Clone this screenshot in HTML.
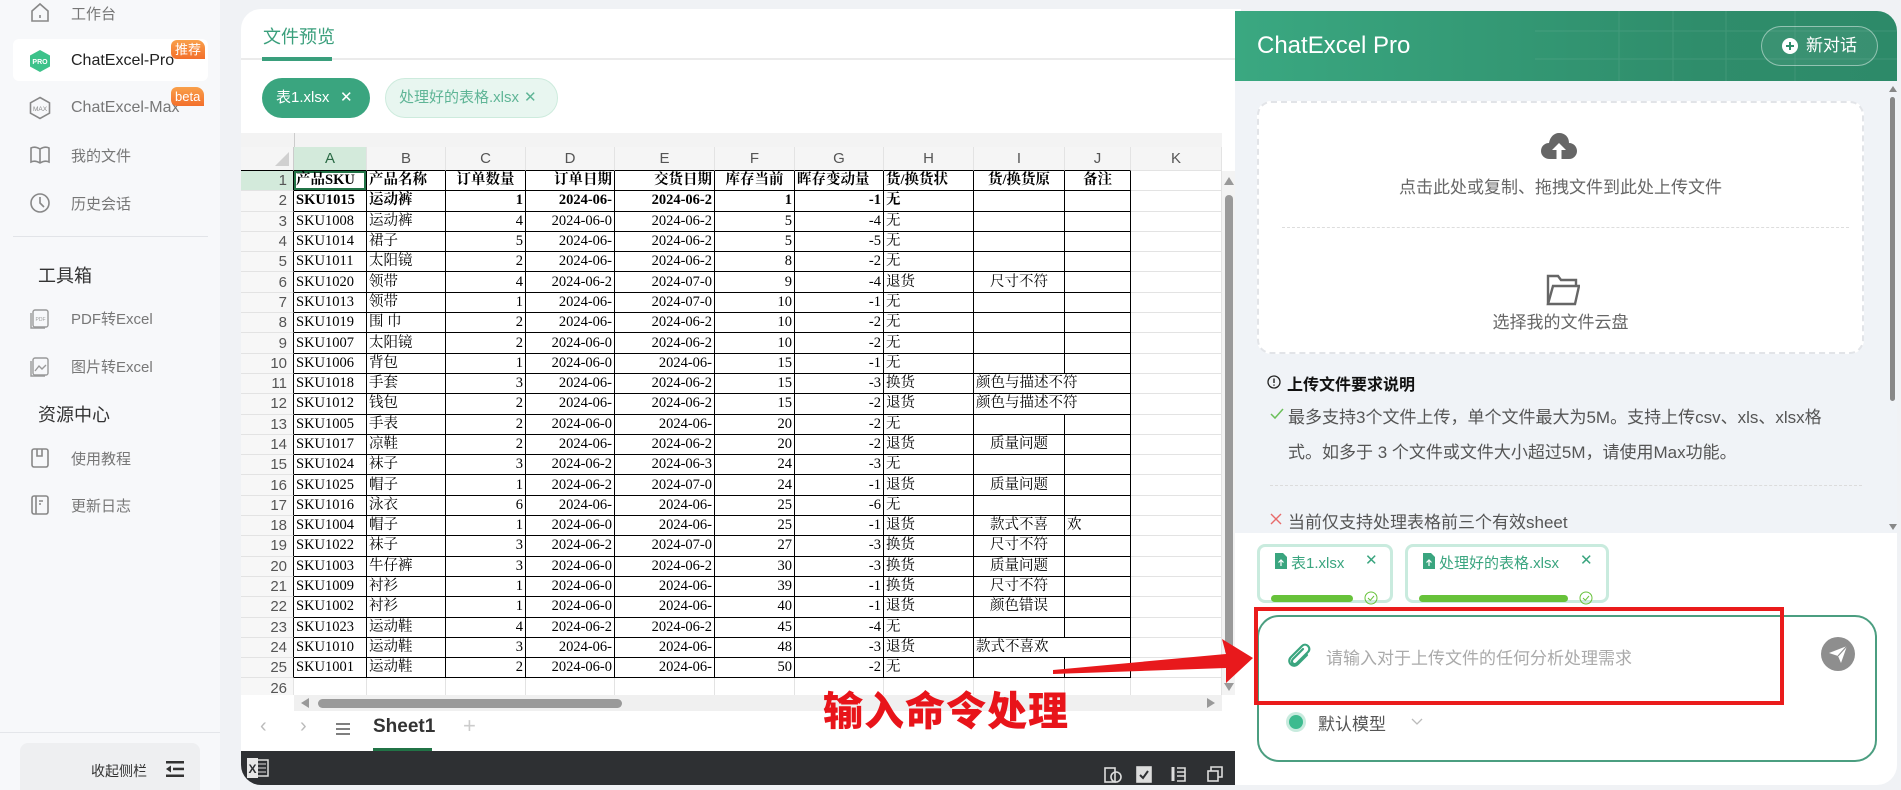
<!DOCTYPE html>
<html><head><meta charset="utf-8"><style>
*{box-sizing:border-box;margin:0;padding:0}
body{width:1901px;height:790px;overflow:hidden;background:#f0f2f5;font-family:"Liberation Sans","Noto Sans CJK SC",sans-serif;position:relative}
.abs{position:absolute}
#side{left:0;top:0;width:220px;height:790px;background:#f7f8fa}
.it{position:absolute;left:0;width:220px;height:30px;display:flex;align-items:center;font-size:15px;color:#777}
.it svg{position:absolute;left:29px}
.it span{position:absolute;left:71px}
.badge{position:absolute;color:#fff;font-size:13px;border-radius:6px 8px 0 6px;background:linear-gradient(180deg,#f9a04b,#f36f2b);padding:0 4px;height:19px;line-height:19px}
#main{left:241px;top:9px;width:1000px;height:776px;background:#fff;border-radius:20px 0 0 20px;overflow:hidden}
table{border-collapse:separate;border-spacing:0;table-layout:fixed;font-family:"Liberation Serif","Noto Serif CJK SC",serif;font-size:14.5px;color:#000}
td{height:20.3px;border-right:1px solid #e3e3e3;border-bottom:1px solid #e3e3e3;white-space:nowrap;overflow:hidden;padding:0 2px;line-height:19px}
td.d{border-right:1px solid #000;border-bottom:1px solid #000}
td.r{text-align:right}
td.c{text-align:center}
td.ov{overflow:visible;border-right:none}
td.h{background:#f7f7f7;color:#555;text-align:right;padding-right:6px;font-family:"Liberation Sans",sans-serif;font-size:15px;border-right:1px solid #000;border-bottom:1px solid #e3e3e3}
tr.ch td{height:24px;background:#f5f5f5;color:#555;text-align:center;font-family:"Liberation Sans",sans-serif;font-size:15px;border-bottom:1px solid #000;border-right:1px solid #e3e3e3}
tr.b td{font-weight:bold}
#chat{left:1235px;top:11px;width:662px;height:774px;background:#f0f3f7;border-radius:0 20px 20px 0;overflow:hidden}
</style></head><body>

<div id="side" class="abs">
 <div class="it" style="top:-2px"><svg width="22" height="22" viewBox="0 0 22 22" fill="none" stroke="#888" stroke-width="1.6"><path d="M3 9 L11 2 L19 9 V19 H3 Z"/><path d="M11 13v3"/></svg><span>工作台</span></div>
 <div class="abs" style="left:13px;top:39px;width:195px;height:42px;background:#fff;border-radius:6px"></div>
 <div class="it" style="top:46px;color:#222;font-size:16px"><svg width="22" height="24" viewBox="0 0 22 24"><path d="M11 1 L21 6.5 V17.5 L11 23 L1 17.5 V6.5 Z" fill="#3cc28a"/><text x="11" y="15" font-size="7" fill="#fff" text-anchor="middle" font-family="Liberation Sans" font-weight="bold">PRO</text></svg><span>ChatExcel-Pro</span></div>
 <div class="badge" style="left:171px;top:40px">推荐</div>
 <div class="it" style="top:93px;font-size:16px"><svg width="22" height="24" viewBox="0 0 22 24" fill="none" stroke="#888" stroke-width="1.6"><path d="M11 1.5 L20.5 6.8 V17.2 L11 22.5 L1.5 17.2 V6.8 Z"/><text x="11" y="15" font-size="6.5" fill="#888" stroke="none" text-anchor="middle" font-family="Liberation Sans">MAX</text></svg><span>ChatExcel-Max</span></div>
 <div class="badge" style="left:171px;top:87px">beta</div>
 <div class="it" style="top:140px"><svg width="22" height="22" viewBox="0 0 22 22" fill="none" stroke="#888" stroke-width="1.6"><path d="M2 4 Q6 2 11 5 Q16 2 20 4 V18 Q16 16 11 19 Q6 16 2 18 Z M11 5 V19"/></svg><span>我的文件</span></div>
 <div class="it" style="top:188px"><svg width="22" height="22" viewBox="0 0 22 22" fill="none" stroke="#888" stroke-width="1.6"><circle cx="11" cy="11" r="9"/><path d="M11 5 V11 L15 15"/></svg><span>历史会话</span></div>
 <div class="abs" style="left:13px;top:236px;width:195px;height:1px;background:#e2e4e8"></div>
 <div class="abs" style="left:38px;top:262px;font-size:18px;color:#333">工具箱</div>
 <div class="it" style="top:303px"><svg width="22" height="22" viewBox="0 0 22 22" fill="none" stroke="#999" stroke-width="1.4"><rect x="4" y="3" width="15" height="17" rx="2"/><path d="M2 6 V21 H16"/><text x="11.5" y="14" font-size="5" fill="#999" stroke="none" text-anchor="middle">PDF</text></svg><span>PDF转Excel</span></div>
 <div class="it" style="top:351px"><svg width="22" height="22" viewBox="0 0 22 22" fill="none" stroke="#999" stroke-width="1.4"><rect x="4" y="3" width="15" height="17" rx="2"/><path d="M2 6 V21 H16"/><path d="M6 16 L10 11 L13 14 L17 10"/></svg><span>图片转Excel</span></div>
 <div class="abs" style="left:38px;top:401px;font-size:18px;color:#333">资源中心</div>
 <div class="it" style="top:443px"><svg width="22" height="22" viewBox="0 0 22 22" fill="none" stroke="#888" stroke-width="1.6"><rect x="3" y="2" width="16" height="18" rx="2"/><path d="M8 2 V9 H13 V2"/></svg><span>使用教程</span></div>
 <div class="it" style="top:490px"><svg width="22" height="22" viewBox="0 0 22 22" fill="none" stroke="#888" stroke-width="1.6"><rect x="3" y="2" width="16" height="18" rx="2"/><path d="M7 2 V20 M10 7 H14 M10 10 H12"/></svg><span>更新日志</span></div>
 <div class="abs" style="left:0;top:732px;width:220px;height:1px;background:#e4e6ea"></div>
 <div class="abs" style="left:20px;top:743px;width:180px;height:47px;background:#eeeff1;border-radius:8px 8px 0 0"></div>
 <div class="abs" style="left:91px;top:761px;font-size:14px;color:#333">收起侧栏</div>
 <svg class="abs" style="left:166px;top:761px" width="18" height="16" viewBox="0 0 18 16" fill="#333"><rect x="0" y="0" width="18" height="2.5"/><rect x="7" y="6.7" width="11" height="2.5"/><rect x="0" y="13.5" width="18" height="2.5"/><path d="M0 8 L5 4.5 V11.5 Z"/></svg>
</div>

<div id="main" class="abs">
 <div class="abs" style="left:22px;top:14px;font-size:18px;color:#3a9f7c">文件预览</div>
 <div class="abs" style="left:0;top:49px;width:1000px;height:2px;background:#ebebeb"></div>
 <div class="abs" style="left:21px;top:48px;width:70px;height:4px;background:#3a9f7c"></div>
 <div class="abs" style="left:21px;top:69px;width:108px;height:40px;border-radius:20px;background:#3aa57f;color:#fff;font-size:15px;line-height:40px;padding-left:14px">表1.xlsx<span style="position:absolute;left:78px;font-size:15px">✕</span></div>
 <div class="abs" style="left:144px;top:69px;width:173px;height:40px;border-radius:20px;background:#e8f6f0;border:1px solid #cdebdd;color:#5fb596;font-size:15px;line-height:38px;padding-left:13px">处理好的表格.xlsx<span style="position:absolute;left:138px">✕</span></div>

 <div class="abs" style="left:0;top:124px;width:981px;height:14px;background:#f3f3f3"></div>
 <div class="abs" style="left:53px;top:124px;width:1px;height:14px;background:#ccc"></div>
 <div class="abs" style="left:0;top:138px;width:981px;height:548px;overflow:hidden">
 <table style="width:981px">
 <colgroup><col style="width:53px"><col style="width:73px"><col style="width:79px"><col style="width:80px"><col style="width:89px"><col style="width:100px"><col style="width:80px"><col style="width:89px"><col style="width:90px"><col style="width:91px"><col style="width:66px"><col style="width:91px"></colgroup>
 <tr class="ch"><td style="border-right:1px solid #ccc"><svg width="14" height="14" style="position:relative;left:15px;top:3px"><path d="M14 0 V14 H0 Z" fill="#d0d0d0"/></svg></td><td style="background:#d3eadb;color:#2a6a45">A</td><td>B</td><td>C</td><td>D</td><td>E</td><td>F</td><td>G</td><td>H</td><td>I</td><td>J</td><td style="border-bottom:1px solid #e3e3e3">K</td></tr>
 <tr class="b"><td class="h" style="background:#d3eadb;font-weight:normal">1</td><td class="d" style="box-shadow:inset 0 0 0 2px #217346">产品SKU</td><td class="d">产品名称</td><td class="d c">订单数量</td><td class="d r">订单日期</td><td class="d r">交货日期</td><td class="d c">库存当前</td><td class="d">晖存变动量</td><td class="d">货/换货状</td><td class="d c">货/换货原</td><td class="d c">备注</td><td></td></tr>
 <tr class="b"><td class="h" style="font-weight:normal">2</td><td class="d">SKU1015</td><td class="d">运动裤</td><td class="d r">1</td><td class="d r">2024-06-</td><td class="d r">2024-06-2</td><td class="d r">1</td><td class="d r">-1</td><td class="d">无</td><td class="d"></td><td class="d"></td><td></td></tr>
 <tr><td class="h">3</td><td class="d">SKU1008</td><td class="d">运动裤</td><td class="d r">4</td><td class="d r">2024-06-0</td><td class="d r">2024-06-2</td><td class="d r">5</td><td class="d r">-4</td><td class="d">无</td><td class="d"></td><td class="d"></td><td></td></tr>
 <tr><td class="h">4</td><td class="d">SKU1014</td><td class="d">裙子</td><td class="d r">5</td><td class="d r">2024-06-</td><td class="d r">2024-06-2</td><td class="d r">5</td><td class="d r">-5</td><td class="d">无</td><td class="d"></td><td class="d"></td><td></td></tr>
 <tr><td class="h">5</td><td class="d">SKU1011</td><td class="d">太阳镜</td><td class="d r">2</td><td class="d r">2024-06-</td><td class="d r">2024-06-2</td><td class="d r">8</td><td class="d r">-2</td><td class="d">无</td><td class="d"></td><td class="d"></td><td></td></tr>
 <tr><td class="h">6</td><td class="d">SKU1020</td><td class="d">领带</td><td class="d r">4</td><td class="d r">2024-06-2</td><td class="d r">2024-07-0</td><td class="d r">9</td><td class="d r">-4</td><td class="d">退货</td><td class="d c">尺寸不符</td><td class="d"></td><td></td></tr>
 <tr><td class="h">7</td><td class="d">SKU1013</td><td class="d">领带</td><td class="d r">1</td><td class="d r">2024-06-</td><td class="d r">2024-07-0</td><td class="d r">10</td><td class="d r">-1</td><td class="d">无</td><td class="d"></td><td class="d"></td><td></td></tr>
 <tr><td class="h">8</td><td class="d">SKU1019</td><td class="d">围 巾</td><td class="d r">2</td><td class="d r">2024-06-</td><td class="d r">2024-06-2</td><td class="d r">10</td><td class="d r">-2</td><td class="d">无</td><td class="d"></td><td class="d"></td><td></td></tr>
 <tr><td class="h">9</td><td class="d">SKU1007</td><td class="d">太阳镜</td><td class="d r">2</td><td class="d r">2024-06-0</td><td class="d r">2024-06-2</td><td class="d r">10</td><td class="d r">-2</td><td class="d">无</td><td class="d"></td><td class="d"></td><td></td></tr>
 <tr><td class="h">10</td><td class="d">SKU1006</td><td class="d">背包</td><td class="d r">1</td><td class="d r">2024-06-0</td><td class="d r">2024-06-</td><td class="d r">15</td><td class="d r">-1</td><td class="d">无</td><td class="d"></td><td class="d"></td><td></td></tr>
 <tr><td class="h">11</td><td class="d">SKU1018</td><td class="d">手套</td><td class="d r">3</td><td class="d r">2024-06-</td><td class="d r">2024-06-2</td><td class="d r">15</td><td class="d r">-3</td><td class="d">换货</td><td class="d ov">颜色与描述不符</td><td class="d"></td><td></td></tr>
 <tr><td class="h">12</td><td class="d">SKU1012</td><td class="d">钱包</td><td class="d r">2</td><td class="d r">2024-06-</td><td class="d r">2024-06-2</td><td class="d r">15</td><td class="d r">-2</td><td class="d">退货</td><td class="d ov">颜色与描述不符</td><td class="d"></td><td></td></tr>
 <tr><td class="h">13</td><td class="d">SKU1005</td><td class="d">手表</td><td class="d r">2</td><td class="d r">2024-06-0</td><td class="d r">2024-06-</td><td class="d r">20</td><td class="d r">-2</td><td class="d">无</td><td class="d"></td><td class="d"></td><td></td></tr>
 <tr><td class="h">14</td><td class="d">SKU1017</td><td class="d">凉鞋</td><td class="d r">2</td><td class="d r">2024-06-</td><td class="d r">2024-06-2</td><td class="d r">20</td><td class="d r">-2</td><td class="d">退货</td><td class="d c">质量问题</td><td class="d"></td><td></td></tr>
 <tr><td class="h">15</td><td class="d">SKU1024</td><td class="d">袜子</td><td class="d r">3</td><td class="d r">2024-06-2</td><td class="d r">2024-06-3</td><td class="d r">24</td><td class="d r">-3</td><td class="d">无</td><td class="d"></td><td class="d"></td><td></td></tr>
 <tr><td class="h">16</td><td class="d">SKU1025</td><td class="d">帽子</td><td class="d r">1</td><td class="d r">2024-06-2</td><td class="d r">2024-07-0</td><td class="d r">24</td><td class="d r">-1</td><td class="d">退货</td><td class="d c">质量问题</td><td class="d"></td><td></td></tr>
 <tr><td class="h">17</td><td class="d">SKU1016</td><td class="d">泳衣</td><td class="d r">6</td><td class="d r">2024-06-</td><td class="d r">2024-06-</td><td class="d r">25</td><td class="d r">-6</td><td class="d">无</td><td class="d"></td><td class="d"></td><td></td></tr>
 <tr><td class="h">18</td><td class="d">SKU1004</td><td class="d">帽子</td><td class="d r">1</td><td class="d r">2024-06-0</td><td class="d r">2024-06-</td><td class="d r">25</td><td class="d r">-1</td><td class="d">退货</td><td class="d c">款式不喜</td><td class="d">欢</td><td></td></tr>
 <tr><td class="h">19</td><td class="d">SKU1022</td><td class="d">袜子</td><td class="d r">3</td><td class="d r">2024-06-2</td><td class="d r">2024-07-0</td><td class="d r">27</td><td class="d r">-3</td><td class="d">换货</td><td class="d c">尺寸不符</td><td class="d"></td><td></td></tr>
 <tr><td class="h">20</td><td class="d">SKU1003</td><td class="d">牛仔裤</td><td class="d r">3</td><td class="d r">2024-06-0</td><td class="d r">2024-06-2</td><td class="d r">30</td><td class="d r">-3</td><td class="d">换货</td><td class="d c">质量问题</td><td class="d"></td><td></td></tr>
 <tr><td class="h">21</td><td class="d">SKU1009</td><td class="d">衬衫</td><td class="d r">1</td><td class="d r">2024-06-0</td><td class="d r">2024-06-</td><td class="d r">39</td><td class="d r">-1</td><td class="d">换货</td><td class="d c">尺寸不符</td><td class="d"></td><td></td></tr>
 <tr><td class="h">22</td><td class="d">SKU1002</td><td class="d">衬衫</td><td class="d r">1</td><td class="d r">2024-06-0</td><td class="d r">2024-06-</td><td class="d r">40</td><td class="d r">-1</td><td class="d">退货</td><td class="d c">颜色错误</td><td class="d"></td><td></td></tr>
 <tr><td class="h">23</td><td class="d">SKU1023</td><td class="d">运动鞋</td><td class="d r">4</td><td class="d r">2024-06-2</td><td class="d r">2024-06-2</td><td class="d r">45</td><td class="d r">-4</td><td class="d">无</td><td class="d"></td><td class="d"></td><td></td></tr>
 <tr><td class="h">24</td><td class="d">SKU1010</td><td class="d">运动鞋</td><td class="d r">3</td><td class="d r">2024-06-</td><td class="d r">2024-06-</td><td class="d r">48</td><td class="d r">-3</td><td class="d">退货</td><td class="d ov">款式不喜欢</td><td class="d"></td><td></td></tr>
 <tr><td class="h">25</td><td class="d">SKU1001</td><td class="d">运动鞋</td><td class="d r">2</td><td class="d r">2024-06-0</td><td class="d r">2024-06-</td><td class="d r">50</td><td class="d r">-2</td><td class="d">无</td><td class="d"></td><td class="d"></td><td></td></tr>
 <tr><td class="h" style="border-right:1px solid #e3e3e3">26</td><td></td><td></td><td></td><td></td><td></td><td></td><td></td><td></td><td></td><td></td><td></td></tr>
 </table>
 </div>
 <div class="abs" style="left:981px;top:162px;width:14px;height:524px;background:#f3f3f3"></div>
 <svg class="abs" style="left:983px;top:168px" width="10" height="8"><path d="M5 0 L10 8 H0Z" fill="#999"/></svg>
 <div class="abs" style="left:984px;top:186px;width:8px;height:460px;border-radius:4px;background:#9a9a9a"></div>
 <svg class="abs" style="left:983px;top:674px" width="10" height="8"><path d="M0 0 H10 L5 8Z" fill="#999"/></svg>
 <div class="abs" style="left:53px;top:686px;width:928px;height:16px;background:#f0f0f0"></div>
 <svg class="abs" style="left:60px;top:689px" width="8" height="10"><path d="M8 0 V10 L0 5Z" fill="#999"/></svg>
 <div class="abs" style="left:77px;top:690px;width:304px;height:9px;border-radius:5px;background:#9a9a9a"></div>
 <svg class="abs" style="left:966px;top:689px" width="8" height="10"><path d="M0 0 V10 L8 5Z" fill="#999"/></svg>
 <div class="abs" style="left:0;top:702px;width:995px;height:40px;background:#fff"></div>
 <div class="abs" style="left:19px;top:706px;font-size:20px;color:#bbb">‹</div>
 <div class="abs" style="left:59px;top:706px;font-size:20px;color:#bbb">›</div>
 <svg class="abs" style="left:95px;top:714px" width="14" height="12"><path d="M0 1H14M0 6H14M0 11H14" stroke="#555" stroke-width="1.6"/></svg>
 <div class="abs" style="left:132px;top:707px;font-size:19px;font-weight:bold;color:#333">Sheet1</div>
 <div class="abs" style="left:132px;top:739px;width:59px;height:3px;background:#217346"></div>
 <div class="abs" style="left:222px;top:704px;font-size:22px;color:#ccc">+</div>
 <div class="abs" style="left:0;top:742px;width:995px;height:34px;background:#2e3033;border-radius:0 0 0 14px"></div>
 <svg class="abs" style="left:6px;top:749px" width="22" height="20"><rect x="8" y="2" width="13" height="16" fill="none" stroke="#ddd" stroke-width="1.5"/><path d="M11 6H19M11 10H19M11 14H19" stroke="#ddd"/><rect x="0" y="0" width="11" height="20" fill="#e8e8e8"/><text x="5.5" y="15" font-size="12" font-weight="bold" fill="#2e3033" text-anchor="middle">X</text></svg>
 <svg class="abs" style="left:863px;top:755px" width="130" height="20" fill="none" stroke="#ddd" stroke-width="1.6"><rect x="1" y="4" width="10" height="14"/><circle cx="12" cy="13" r="5"/><rect x="33" y="3" width="14" height="15" fill="#ddd"/><path d="M36 11 L39 14 L44 7" stroke="#2e3033" stroke-width="2"/><path d="M69 3V17" stroke-width="3"/><path d="M73 4H81V17H73M73 8H81M73 12H81"/><rect x="104" y="7" width="10" height="10"/><path d="M107 7V3H118V13H114"/></svg>
</div>

<div class="abs" style="left:823px;top:682px;font-size:40px;font-weight:900;color:#e8141a;letter-spacing:1px;font-family:'Noto Sans CJK SC',sans-serif;line-height:52px">输入命令处理</div>

<div id="chat" class="abs">
 <div class="abs" style="left:0;top:0;width:662px;height:70px;background:linear-gradient(90deg,#3aa881,#2f8d6b 70%,#2d8a69)"></div>
 <svg class="abs" style="left:0;top:0" width="662" height="70"><path d="M384 0V70M438 0V70M491 0V70M560 0V70M300 20H662M300 48H662" stroke="rgba(255,255,255,0.09)" stroke-width="1"/></svg>
 <div class="abs" style="left:22px;top:21px;font-size:24px;color:#fff">ChatExcel Pro</div>
 <div class="abs" style="left:526px;top:15px;width:117px;height:40px;border-radius:20px;border:1px solid rgba(255,255,255,0.45);background:rgba(255,255,255,0.06);color:#fff;font-size:17px;line-height:38px;padding-left:44px">新对话</div>
 <svg class="abs" style="left:547px;top:27px" width="16" height="16"><circle cx="8" cy="8" r="8" fill="#fff"/><path d="M8 4V12M4 8H12" stroke="#2f8d6b" stroke-width="2"/></svg>
 <svg class="abs" style="left:654px;top:75px" width="8" height="6"><path d="M4 0L8 6H0Z" fill="#888"/></svg>
 <div class="abs" style="left:655px;top:86px;width:5px;height:304px;border-radius:3px;background:#888"></div>
 <svg class="abs" style="left:654px;top:513px" width="8" height="6"><path d="M0 0H8L4 6Z" fill="#888"/></svg>
 <div class="abs" style="left:22px;top:90px;width:607px;height:253px;background:#fff;border:2px dashed #e2e4e8;border-radius:14px"></div>
 <svg class="abs" style="left:306px;top:121px" width="36" height="28" viewBox="0 0 36 28"><path d="M9 27 C3 27 0 23 0 19 C0 14 4 11 8 11 C9 5 13 1 18 1 C24 1 28 5 28 11 C33 11 36 15 36 19 C36 23 33 27 28 27 Z" fill="#666"/><path d="M18 11 L25 18 H20.5 V27 H15.5 V18 H11 Z" fill="#fff"/></svg>
 <div class="abs" style="left:0;top:162px;width:651px;text-align:center;font-size:17px;color:#666">点击此处或复制、拖拽文件到此处上传文件</div>
 <div class="abs" style="left:47px;top:216px;width:567px;border-top:1px dashed #ddd"></div>
 <svg class="abs" style="left:311px;top:263px" width="34" height="32" viewBox="0 0 34 32" fill="none" stroke="#666" stroke-width="2.4"><path d="M2 30 V2 H12 L15 6 H30 V12"/><path d="M2 30 L7 12 H33 L29 30 Z"/></svg>
 <div class="abs" style="left:0;top:297px;width:651px;text-align:center;font-size:17px;color:#666">选择我的文件云盘</div>
 <svg class="abs" style="left:32px;top:364px" width="14" height="14"><circle cx="7" cy="7" r="6" fill="none" stroke="#222" stroke-width="1.3"/><path d="M7 3.5V8M7 9.5V10.8" stroke="#222" stroke-width="1.4"/></svg>
 <div class="abs" style="left:52px;top:360px;font-size:16px;font-weight:bold;color:#111">上传文件要求说明</div>
 <svg class="abs" style="left:35px;top:397px" width="14" height="12"><path d="M1 6L5 10L13 1" fill="none" stroke="#6bbf5a" stroke-width="1.5"/></svg>
 <div class="abs" style="left:53px;top:389px;width:560px;font-size:17px;color:#555;line-height:35px">最多支持3个文件上传，单个文件最大为5M。支持上传csv、xls、xlsx格式。如多于 3 个文件或文件大小超过5M，请使用Max功能。</div>
 <div class="abs" style="left:35px;top:474px;width:592px;border-top:1px dashed #dcdcdc"></div>
 <svg class="abs" style="left:35px;top:502px" width="12" height="12"><path d="M1 1L11 11M11 1L1 11" stroke="#e86a6a" stroke-width="1.4"/></svg>
 <div class="abs" style="left:53px;top:497px;font-size:17px;color:#555">当前仅支持处理表格前三个有效sheet</div>
 <div class="abs" style="left:0;top:522px;width:662px;height:252px;background:#fff"></div>
 <div class="abs" style="left:22px;top:533px;width:136px;height:59px;border:3px solid #c9ebde;border-radius:8px;background:#fff"></div>
 <div class="abs" style="left:170px;top:533px;width:204px;height:59px;border:3px solid #c9ebde;border-radius:8px;background:#fff"></div>
 <svg class="abs" style="left:40px;top:542px" width="12" height="16"><path d="M0 0H8L12 4V16H0Z" fill="#3aa57f"/><path d="M6 13V7M3.5 9.5L6 7L8.5 9.5" stroke="#fff" stroke-width="1.2" fill="none"/></svg>
 <div class="abs" style="left:56px;top:541px;font-size:15px;color:#3aa57f">表1.xlsx</div>
 <div class="abs" style="left:130px;top:540px;font-size:15px;color:#3aa57f">✕</div>
 <div class="abs" style="left:36px;top:584px;width:82px;height:7px;border-radius:4px;background:#67c23a"></div>
 <svg class="abs" style="left:129px;top:580px" width="14" height="14"><circle cx="7" cy="7" r="6" fill="none" stroke="#67c23a"/><path d="M4 7L6.3 9.3L10 5" fill="none" stroke="#67c23a"/></svg>
 <svg class="abs" style="left:188px;top:542px" width="12" height="16"><path d="M0 0H8L12 4V16H0Z" fill="#3aa57f"/><path d="M6 13V7M3.5 9.5L6 7L8.5 9.5" stroke="#fff" stroke-width="1.2" fill="none"/></svg>
 <div class="abs" style="left:204px;top:541px;font-size:15px;color:#3aa57f">处理好的表格.xlsx</div>
 <div class="abs" style="left:345px;top:540px;font-size:15px;color:#3aa57f">✕</div>
 <div class="abs" style="left:184px;top:584px;width:149px;height:7px;border-radius:4px;background:#67c23a"></div>
 <svg class="abs" style="left:344px;top:580px" width="14" height="14"><circle cx="7" cy="7" r="6" fill="none" stroke="#67c23a"/><path d="M4 7L6.3 9.3L10 5" fill="none" stroke="#67c23a"/></svg>
 <div class="abs" style="left:22px;top:604px;width:620px;height:147px;border:2px solid #4b9e80;border-radius:22px"></div>
 <svg class="abs" style="left:50px;top:630px" width="30" height="30" viewBox="0 0 30 30" fill="none" stroke="#3aa57f" stroke-width="2.2" stroke-linecap="round"><path d="M18 8 L8 18 C5 21 9 25 12 22 L23 11 C27 7 21 1 17 5 L6 16 C1 21 8 28 13 23 L22 14"/></svg>
 <div class="abs" style="left:91px;top:633px;font-size:17px;color:#aaa">请输入对于上传文件的任何分析处理需求</div>
 <svg class="abs" style="left:585px;top:625px" width="36" height="36"><circle cx="18" cy="18" r="17" fill="#8e8e8e"/><path d="M9 17 L27 10 L21 27 L18 20 Z" fill="#fff"/><path d="M18 20 L27 10" stroke="#8e8e8e" stroke-width="1.2"/></svg>
 <svg class="abs" style="left:50px;top:700px" width="22" height="22"><circle cx="11" cy="11" r="10" fill="#c8ebde"/><circle cx="11" cy="11" r="7" fill="#3dbb8f"/></svg>
 <div class="abs" style="left:83px;top:699px;font-size:17px;color:#555">默认模型</div>
 <svg class="abs" style="left:176px;top:707px" width="12" height="8"><path d="M1 1L6 6L11 1" fill="none" stroke="#bbb" stroke-width="1.3"/></svg>
</div>
<svg class="abs" style="left:1040px;top:630px" width="220" height="60"><path d="M13 40 L186 24 L182 9 L213 28 L186 53 L186 38 L13 44 Z" fill="#e8191c"/></svg>
<div class="abs" style="left:1254px;top:607px;width:530px;height:98px;border:4px solid #ea1b1b"></div>
</body></html>
